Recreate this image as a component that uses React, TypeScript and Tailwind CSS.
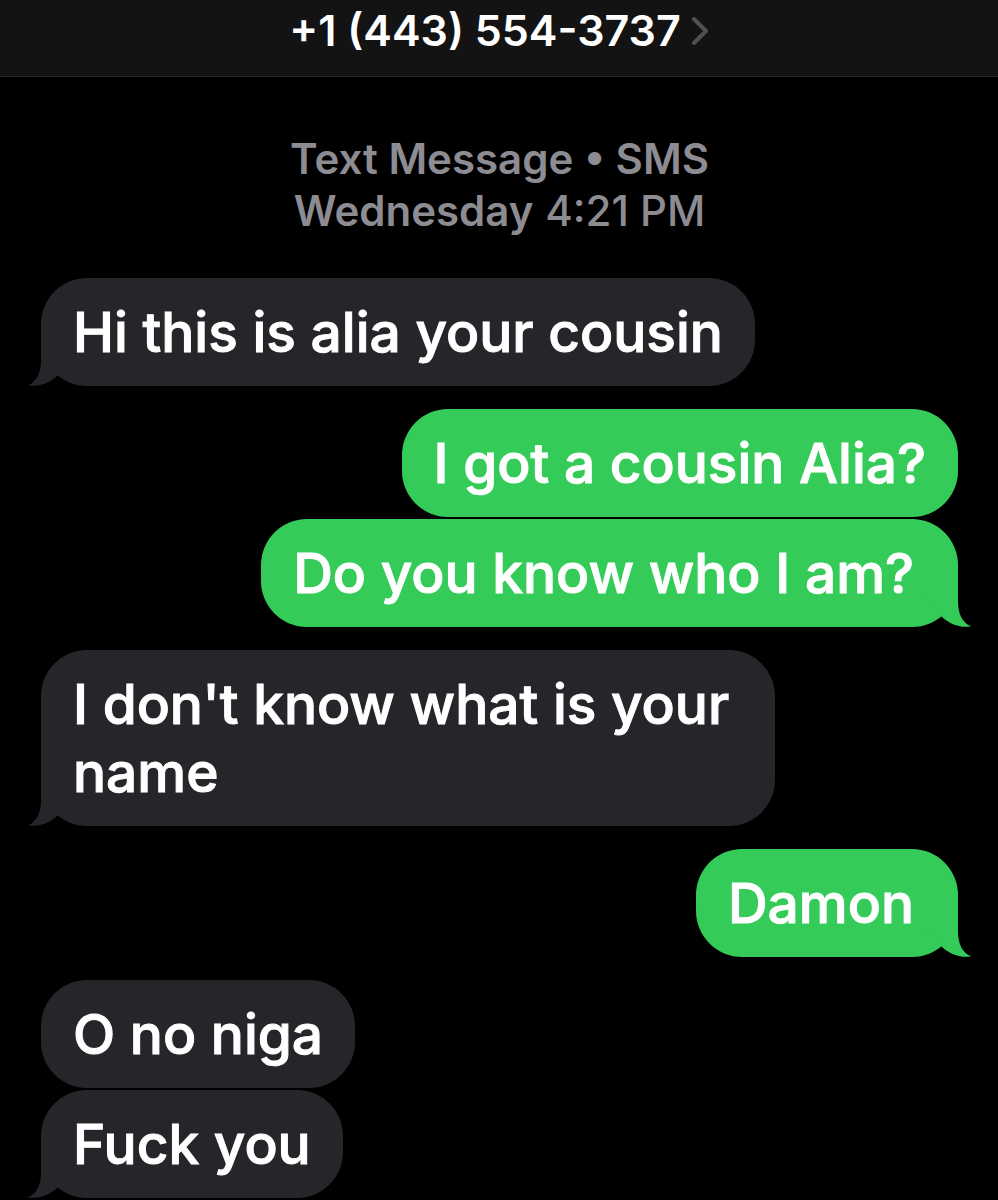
type Message = { text: string; side: 'in' | 'out'; tail?: boolean; start?: boolean };

const messages: Message[] = [
  { text: 'Hi this is alia your cousin', side: 'in', tail: true },
  { text: 'I got a cousin Alia?', side: 'out', start: true },
  { text: 'Do you know who I am?', side: 'out', tail: true },
  { text: "I don't know what is your name", side: 'in', tail: true, start: true },
  { text: 'Damon', side: 'out', tail: true, start: true },
  { text: 'O no niga', side: 'in', start: true },
  { text: 'Fuck you', side: 'in', tail: true },
];

function Tail({ side }: { side: 'in' | 'out' }) {
  return (
    <svg
      aria-hidden="true"
      viewBox="0 0 44 48"
      className={
        side === 'in'
          ? 'absolute bottom-0 -left-[13px] h-12 w-11 fill-[#26252a]'
          : 'absolute bottom-0 -right-[13px] h-12 w-11 -scale-x-100 fill-[#34cb59]'
      }
    >
      <path d="M13 0V22C13 35 9 43 0 47.5C12 49 21 45 29 38L44 20V0Z" />
    </svg>
  );
}

function Bubble({ text, side, tail, start }: Message) {
  const incoming = side === 'in';
  return (
    <li className={`flex ${incoming ? 'justify-start' : 'justify-end'} ${start ? 'mt-[23px]' : 'mt-0.5'}`}>
      <div
        className={`relative max-w-[80%] rounded-[46px] px-8 py-5 ${incoming ? 'bg-[#26252a]' : 'bg-[#34cb59]'} ${!incoming && tail ? 'pr-11' : ''}`}
      >
        {tail && <Tail side={side} />}
        <p className="relative text-[55px] leading-[68px] font-medium [-webkit-text-stroke:1px_white]">{text}</p>
      </div>
    </li>
  );
}

export default function App() {
  return (
    <div className="min-h-screen overflow-hidden bg-black font-['Inter',sans-serif] text-white">
      <header className="flex h-[77px] justify-center border-b border-[#29292b] bg-[#131313]">
        <button className="flex h-[60px] items-center gap-2.5 text-[43px] font-semibold">
          +1 (443) 554-3737
          <svg aria-hidden="true" viewBox="0 0 18 28" className="mt-0.5 h-7 w-[18px] fill-none stroke-[#505052] stroke-4">
            <path d="M3 2L15 14L3 26" strokeLinecap="round" strokeLinejoin="round" />
          </svg>
        </button>
      </header>
      <main className="pt-14 pr-10 pl-[41px]">
        <div className="text-center text-[42px] leading-[52px] text-[#8d8c93]">
          <p className="font-semibold">Text Message • SMS</p>
          <p><span className="font-semibold">Wednesday</span> <time className="font-medium">4:21 PM</time></p>
        </div>
        <ol className="pt-[39px]">
          {messages.map((message) => (
            <Bubble key={message.text} {...message} />
          ))}
        </ol>
      </main>
    </div>
  );
}
